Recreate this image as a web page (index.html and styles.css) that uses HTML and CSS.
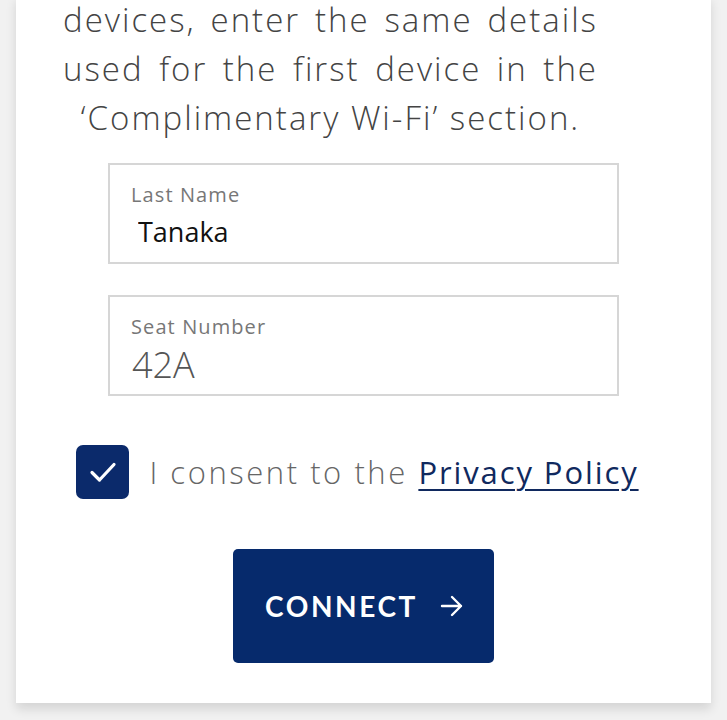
FILE: index.html
```html
<!DOCTYPE html>
<html lang="en">

<head>
    <meta charset="UTF-8">
    <meta name="viewport" content="width=device-width, initial-scale=1.0">
    <title>Complimentary Wi-Fi</title>
    <link rel="stylesheet" href="styles.css">
</head>

<body>
    <div class="card">
        <p class="intro">devices, enter the same details used for the first device in the ‘Complimentary Wi-Fi’ section.</p>

        <form class="wifi-form">
            <div class="field">
                <label for="lastName">Last Name</label>
                <input type="text" id="lastName" class="field-input name-input" value="Tanaka">
            </div>
            <div class="field">
                <label for="seat">Seat Number</label>
                <input type="text" id="seat" class="field-input seat-input" value="42A">
            </div>

            <div class="consent">
                <span class="checkbox">
                    <svg width="30" height="30" viewBox="0 0 30 30" fill="none">
                        <path d="M4 15.5 L11.5 23 L26 7.5" stroke="#fff" stroke-width="3.2" stroke-linecap="round" stroke-linejoin="round"/>
                    </svg>
                </span>
                <span class="consent-text">I consent to the <a href="#">Privacy Policy</a></span>
            </div>

            <button type="button" class="connect">CONNECT
                <svg width="24" height="22" viewBox="0 0 24 22" fill="none">
                    <path d="M2 11 H21 M12 2 L21 11 L12 20" stroke="#fff" stroke-width="2.4" stroke-linecap="round" stroke-linejoin="round"/>
                </svg>
            </button>
        </form>
    </div>
</body>

</html>
```

FILE: styles.css
```css
* {
    margin: 0;
    padding: 0;
    box-sizing: border-box;
}

body {
    font-family: 'Open Sans', 'Noto Sans', sans-serif;
    background-color: #f1f1f1;
    height: 720px;
    overflow: hidden;
}

.card {
    width: 695px;
    margin-left: 16px;
    margin-top: -5px;
    background: white;
    padding-bottom: 40px;
    box-shadow: 0 6px 10px rgba(0, 0, 0, 0.12);
}

.intro {
    margin: 0 113px 0 47px;
    font-size: 33px;
    line-height: 49px;
    font-weight: 300;
    color: #444;
    letter-spacing: 2px;
    text-align: justify;
    text-align-last: center;
}

.wifi-form {
    display: flex;
    flex-direction: column;
    align-items: center;
    margin-top: 21px;
}

.field {
    width: 511px;
    height: 101px;
    border: 2px solid #d6d6d6;
    padding: 17px 20px 0 21px;
    margin-bottom: 31px;
    display: flex;
    flex-direction: column;
}

.field label {
    font-size: 20px;
    color: #777;
    font-weight: 400;
    letter-spacing: 1.1px;
    line-height: 26px;
}

.field-input {
    border: none;
    outline: none;
    background: transparent;
    font-family: inherit;
    width: 100%;
}

.name-input {
    font-size: 27px;
    color: #111;
    padding-left: 7px;
    margin-top: 5px;
}

.seat-input {
    font-size: 36px;
    font-weight: 300;
    color: #555;
    padding-left: 1px;
    margin-top: 0;
}

.consent {
    display: flex;
    align-items: center;
    gap: 20px;
    margin-top: 18px;
    margin-left: -12px;
}

.checkbox {
    width: 53px;
    height: 54px;
    border-radius: 7px;
    background-color: #0b2a6b;
    display: flex;
    align-items: center;
    justify-content: center;
}

.consent-text {
    font-size: 31px;
    font-weight: 300;
    color: #666;
    letter-spacing: 2.55px;
}

.consent-text a {
    color: #10295e;
    font-weight: 400;
    letter-spacing: 1.9px;
    text-decoration: underline;
    text-underline-offset: 5px;
    text-decoration-thickness: 2px;
}

.connect {
    margin-top: 50px;
    width: 261px;
    height: 114px;
    background-color: #062a6c;
    border: none;
    border-radius: 5px;
    color: white;
    font-family: 'Lato', sans-serif;
    font-size: 28px;
    font-weight: 700;
    letter-spacing: 2.6px;
    display: flex;
    align-items: center;
    justify-content: center;
    gap: 22px;
    padding-left: 2px;
}
```
